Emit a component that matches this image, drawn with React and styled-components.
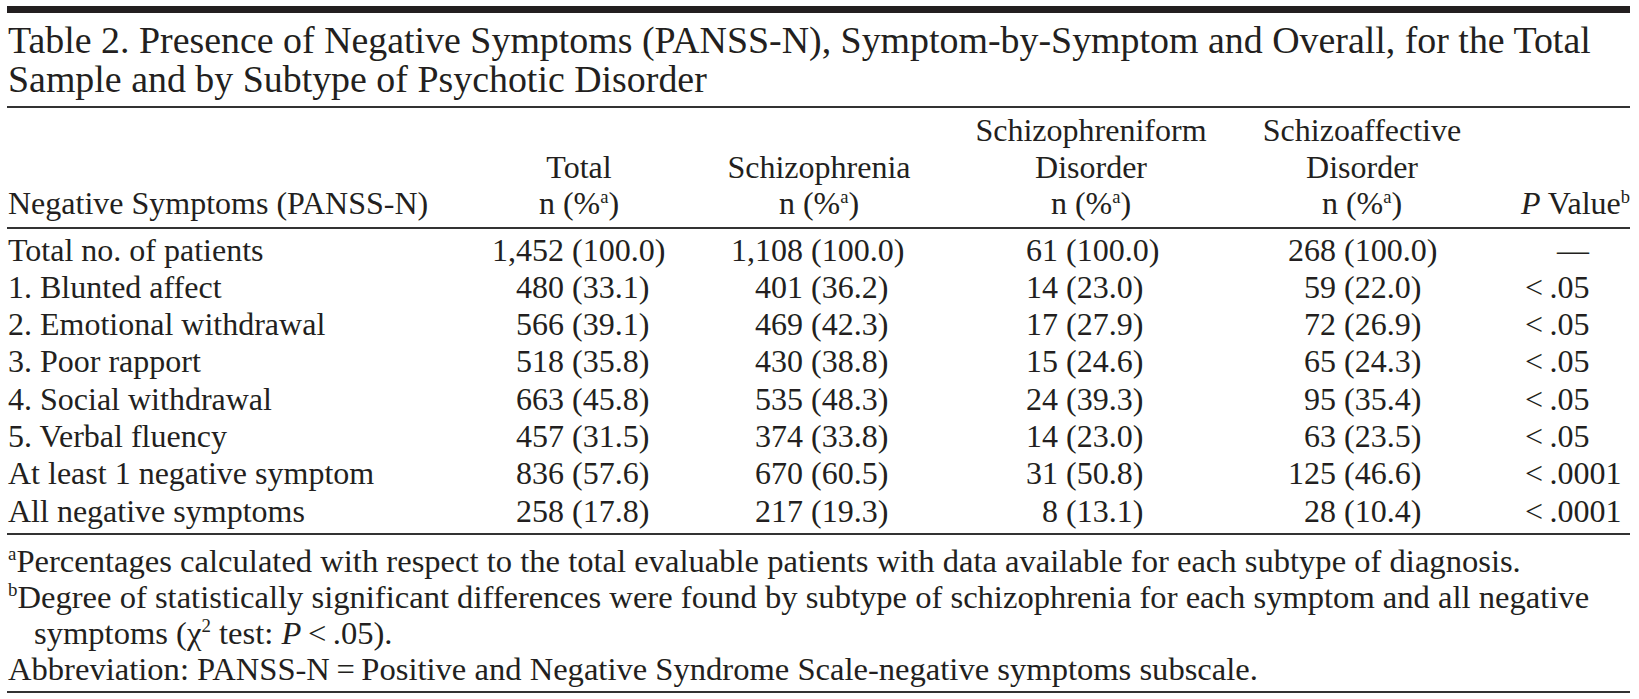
import React from "react";
import styled, { createGlobalStyle } from "styled-components";

const Global = createGlobalStyle`
  html, body { margin: 0; padding: 0; background: #ffffff; }
  body {
    font-family: "Liberation Serif", "Times New Roman", serif;
    color: #231f20;
  }
`;

const COLS = "462px 220px 260px 284px 258px 1fr";
const RULE = "#333333";

const Page = styled.div`
  width: 1623px;
  padding: 6px 0 0 7px;
`;

const TopBar = styled.div`
  height: 7px;
  background: #231f20;
`;

const Title = styled.h1`
  margin: 0;
  padding: 8px 0 8px 1px;
  font-size: 37.9px;
  line-height: 38.5px;
  font-weight: normal;
  border-bottom: 2px solid ${RULE};
`;

const HeadRow = styled.div`
  display: grid;
  grid-template-columns: ${COLS};
  align-items: end;
  padding: 4px 0 5px;
  border-bottom: 2px solid ${RULE};
  font-size: 32px;
  line-height: 36.5px;
`;

const HeadCell = styled.div`
  text-align: ${(p) => p.$align || "center"};
  padding-left: ${(p) => (p.$align === "left" ? "1px" : "0")};
`;

const Body = styled.div`
  padding: 3px 0 3px;
  border-bottom: 2px solid ${RULE};
  font-size: 32px;
  line-height: 37.3px;
`;

const Row = styled.div`
  display: grid;
  grid-template-columns: ${COLS};
  white-space: nowrap;
`;

const Label = styled.div`
  padding-left: 1px;
`;

const NumCell = styled.div`
  display: grid;
  grid-template-columns: ${(p) => p.$w}px auto;
  column-gap: 8px;
`;

const Count = styled.span`
  text-align: right;
`;

const Pct = styled.span`
  text-align: left;
`;

const PCell = styled.div`
  padding-left: ${(p) => (p.$dash ? 66 : 34)}px;
`;

const Notes = styled.div`
  padding: 8px 0 3px;
  border-bottom: 2px solid ${RULE};
  font-size: 32.6px;
  line-height: 36.2px;
`;

const Note = styled.p`
  margin: 0;
  padding-left: ${(p) => (p.$hang ? 27 : 1)}px;
  text-indent: ${(p) => (p.$hang ? -26 : 0)}px;
`;

const Sup = styled.sup`
  font-size: 0.58em;
  line-height: 0;
  vertical-align: 0.62em;
`;

const Ital = styled.i`
  font-style: italic;
`;

const COUNT_W = [95, 114, 109, 103];

const rows = [
  ["Total no. of patients", ["1,452", "100.0"], ["1,108", "100.0"], ["61", "100.0"], ["268", "100.0"], "—"],
  ["1. Blunted affect", ["480", "33.1"], ["401", "36.2"], ["14", "23.0"], ["59", "22.0"], "<\u2009.05"],
  ["2. Emotional withdrawal", ["566", "39.1"], ["469", "42.3"], ["17", "27.9"], ["72", "26.9"], "<\u2009.05"],
  ["3. Poor rapport", ["518", "35.8"], ["430", "38.8"], ["15", "24.6"], ["65", "24.3"], "<\u2009.05"],
  ["4. Social withdrawal", ["663", "45.8"], ["535", "48.3"], ["24", "39.3"], ["95", "35.4"], "<\u2009.05"],
  ["5. Verbal fluency", ["457", "31.5"], ["374", "33.8"], ["14", "23.0"], ["63", "23.5"], "<\u2009.05"],
  ["At least 1 negative symptom", ["836", "57.6"], ["670", "60.5"], ["31", "50.8"], ["125", "46.6"], "<\u2009.0001"],
  ["All negative symptoms", ["258", "17.8"], ["217", "19.3"], ["8", "13.1"], ["28", "10.4"], "<\u2009.0001"],
];

const NPct = () => (
  <>
    n (%<Sup>a</Sup>)
  </>
);

export default function App() {
  return (
    <>
      <Global />
      <Page>
        <TopBar />
        <Title>
          Table 2. Presence of Negative Symptoms (PANSS-N), Symptom-by-Symptom and Overall, for the Total
          <br />
          Sample and by Subtype of Psychotic Disorder
        </Title>
        <HeadRow>
          <HeadCell $align="left">Negative Symptoms (PANSS-N)</HeadCell>
          <HeadCell>
            Total
            <br />
            <NPct />
          </HeadCell>
          <HeadCell>
            Schizophrenia
            <br />
            <NPct />
          </HeadCell>
          <HeadCell>
            Schizophreniform
            <br />
            Disorder
            <br />
            <NPct />
          </HeadCell>
          <HeadCell>
            Schizoaffective
            <br />
            Disorder
            <br />
            <NPct />
          </HeadCell>
          <HeadCell $align="right">
            <Ital>P</Ital> Value<Sup>b</Sup>
          </HeadCell>
        </HeadRow>
        <Body>
          {rows.map((r) => (
            <Row key={r[0]}>
              <Label>{r[0]}</Label>
              {r.slice(1, 5).map((v, i) => (
                <NumCell key={i} $w={COUNT_W[i]}>
                  <Count>{v[0]}</Count>
                  <Pct>({v[1]})</Pct>
                </NumCell>
              ))}
              <PCell $dash={r[5] === "—"}>{r[5]}</PCell>
            </Row>
          ))}
        </Body>
        <Notes>
          <Note $hang>
            <Sup>a</Sup>Percentages calculated with respect to the total evaluable patients with data available for each subtype of diagnosis.
          </Note>
          <Note $hang>
            <Sup>b</Sup>Degree of statistically significant differences were found by subtype of schizophrenia for each symptom and all negative symptoms (χ<Sup>2</Sup> test: <Ital>P</Ital>{"\u2009<\u2009.05)."}
          </Note>
          <Note>Abbreviation: PANSS-N{"\u2009=\u2009"}Positive and Negative Syndrome Scale-negative symptoms subscale.</Note>
        </Notes>
      </Page>
    </>
  );
}
